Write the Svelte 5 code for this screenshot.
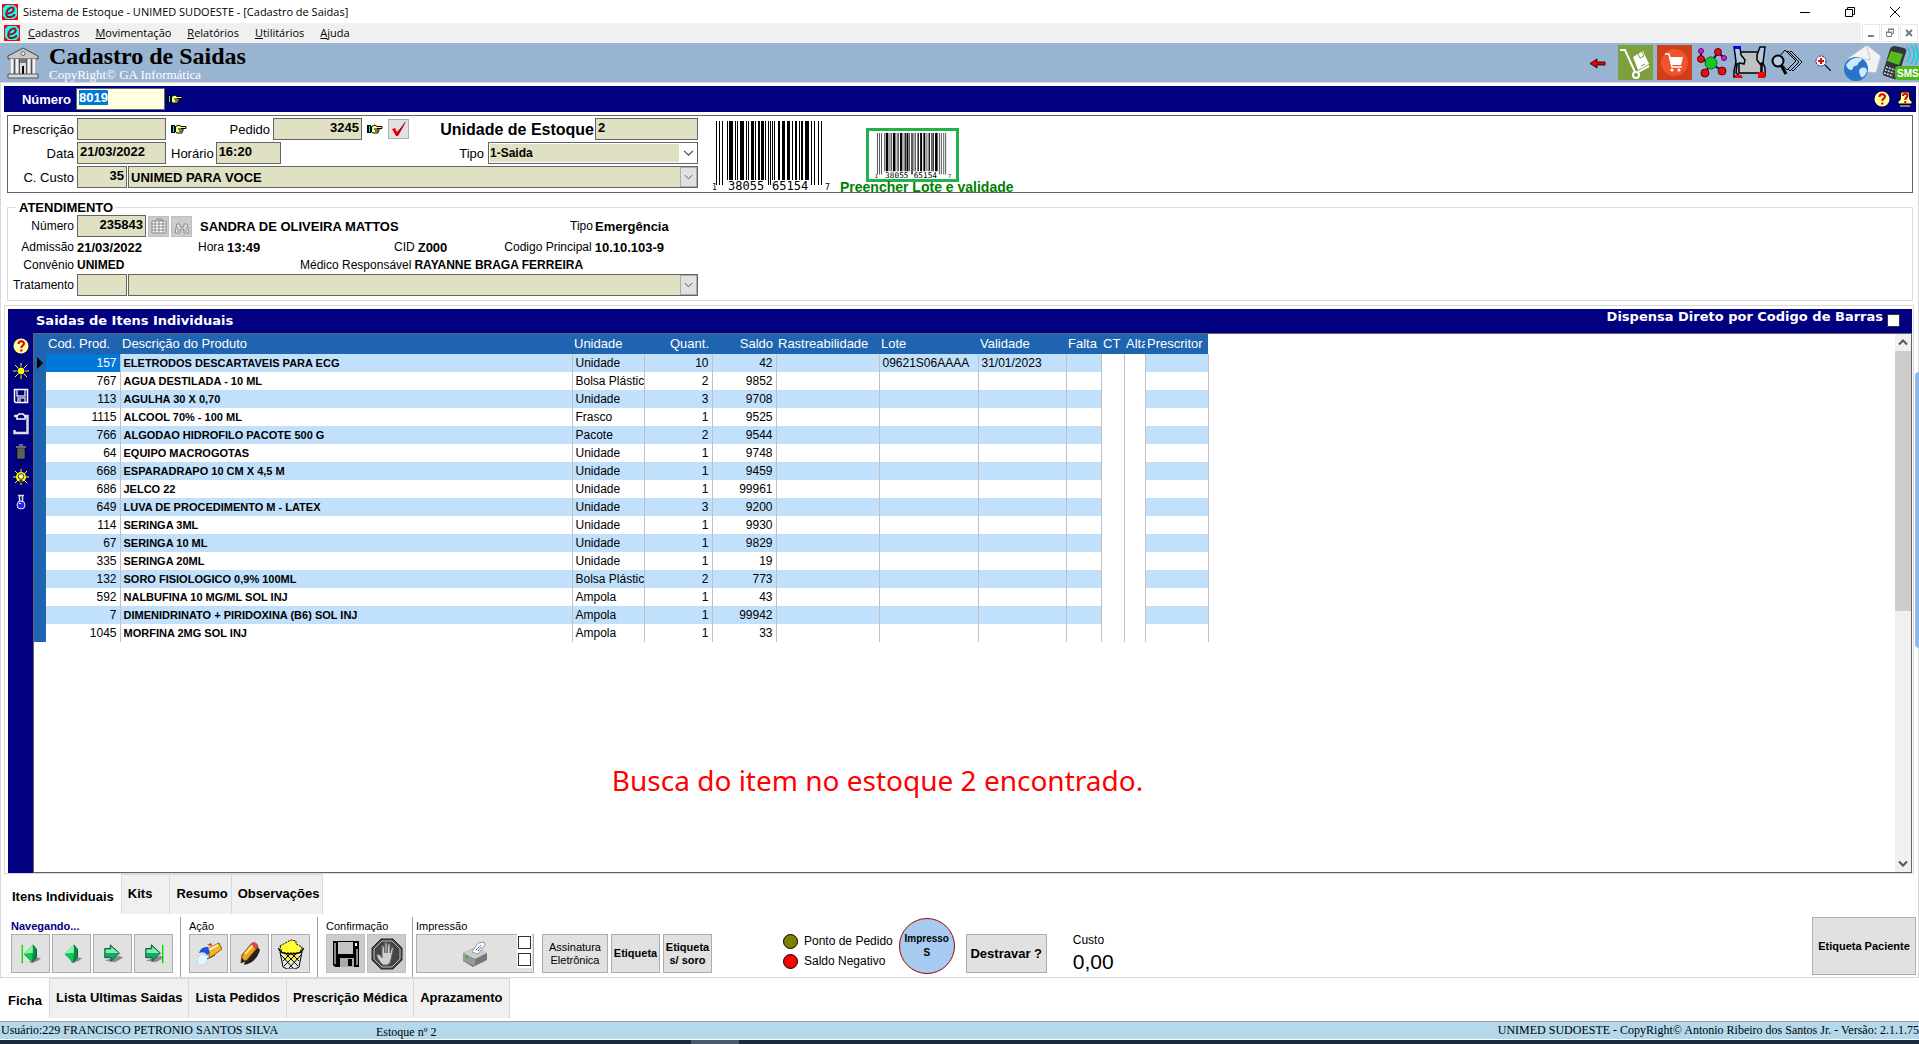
<script lang="ts">
  import { onMount } from 'svelte';

  type Item = { cod: number; desc: string; un: string; qt: number; saldo: number; lote?: string; val?: string };

  const menus = ['Cadastros', 'Movimentação', 'Relatórios', 'Utilitários', 'Ajuda'];
  const items: Item[] = [
    { cod: 157, desc: 'ELETRODOS DESCARTAVEIS PARA ECG', un: 'Unidade', qt: 10, saldo: 42, lote: '09621S06AAAA', val: '31/01/2023' },
    { cod: 767, desc: 'AGUA DESTILADA - 10 ML', un: 'Bolsa Plástica', qt: 2, saldo: 9852 },
    { cod: 113, desc: 'AGULHA 30 X 0,70', un: 'Unidade', qt: 3, saldo: 9708 },
    { cod: 1115, desc: 'ALCOOL 70% - 100 ML', un: 'Frasco', qt: 1, saldo: 9525 },
    { cod: 766, desc: 'ALGODAO HIDROFILO PACOTE 500 G', un: 'Pacote', qt: 2, saldo: 9544 },
    { cod: 64, desc: 'EQUIPO MACROGOTAS', un: 'Unidade', qt: 1, saldo: 9748 },
    { cod: 668, desc: 'ESPARADRAPO 10 CM X 4,5 M', un: 'Unidade', qt: 1, saldo: 9459 },
    { cod: 686, desc: 'JELCO 22', un: 'Unidade', qt: 1, saldo: 99961 },
    { cod: 649, desc: 'LUVA DE PROCEDIMENTO M - LATEX', un: 'Unidade', qt: 3, saldo: 9200 },
    { cod: 114, desc: 'SERINGA 3ML', un: 'Unidade', qt: 1, saldo: 9930 },
    { cod: 67, desc: 'SERINGA 10 ML', un: 'Unidade', qt: 1, saldo: 9829 },
    { cod: 335, desc: 'SERINGA 20ML', un: 'Unidade', qt: 1, saldo: 19 },
    { cod: 132, desc: 'SORO FISIOLOGICO 0,9% 100ML', un: 'Bolsa Plástica', qt: 2, saldo: 773 },
    { cod: 592, desc: 'NALBUFINA 10 MG/ML SOL INJ', un: 'Ampola', qt: 1, saldo: 43 },
    { cod: 7, desc: 'DIMENIDRINATO + PIRIDOXINA (B6) SOL INJ', un: 'Ampola', qt: 1, saldo: 99942 },
    { cod: 1045, desc: 'MORFINA 2MG SOL INJ', un: 'Ampola', qt: 1, saldo: 33 }
  ];
  const itemTabs = ['Itens Individuais', 'Kits', 'Resumo', 'Observações'];
  const pageTabs = ['Ficha', 'Lista Ultimas Saidas', 'Lista Pedidos', 'Prescrição Médica', 'Aprazamento'];

  // [x, width] of the tall guard bars and of the short data bars
  const guards = [[4, 1], [7, 1], [10, 1], [56, 1], [58, 1], [99, 1], [102, 1], [106, 1], [109, 1]];
  const bars = [
    [15, 1], [17, 4], [23, 1], [25, 1], [28, 4], [34, 1], [36, 1], [39, 3], [43, 1], [46, 2], [49, 3], [53, 1],
    [60, 1], [62, 1], [66, 2], [70, 3], [75, 3], [80, 1], [83, 2], [87, 1], [89, 2], [93, 4]
  ];

  let numero: HTMLInputElement;
  onMount(() => {
    numero.focus();
    numero.select();
  });
</script>

{#snippet appIcon()}
  <svg class="i16" viewBox="0 0 16 16"><rect width="16" height="16" fill="#f00" /><path d="M4 1h8l3 3v8l-3 3H4l-3-3V4z" fill="#1ff" /><path d="M5 9.500C9 9.500 12.500 7 11.500 4.500 10.500 2.200 6 4 4.500 8c-1.200 4 1.500 5.500 4 5 2.500-.5 4-2 4-3" fill="none" stroke="#901818" stroke-width="2" /></svg>
{/snippet}

{#snippet hand()}
  <svg class="hand" viewBox="0 0 16 10"><path d="M0 1h4v8H0z" fill="#000" /><path d="M2 2h1v6H2z" fill="#0ff" /><path d="M4.500 2.500 8 1l2 1.500h5v2h-5l2 .5v2l-1 .5v1.500H6L4.500 8z" fill="#ffff8a" stroke="#000" /><path d="M7 5h4M8 7h3" stroke="#000" /></svg>
{/snippet}

{#snippet help()}
  <svg class="i16" viewBox="0 0 16 16"><circle cx="8" cy="8" r="7.500" fill="#ffff9c" /><path d="M5.500 6c0-3.500 5.500-3.500 5.500-.5C11 7.500 8.300 7.500 8.300 10" fill="none" stroke="#e00000" stroke-width="2" /><path d="M7.200 11.500h2.200v2H7.200z" fill="#e00000" /></svg>
{/snippet}

{#snippet helpBell()}
  <svg class="i16" viewBox="0 0 16 16"><path d="M4 1h8l1 8 2 1v3H1v-3l2-1z" fill="#ffff9c" stroke="#000" /><path d="M3 15h10" stroke="#ffff9c" /><path d="M6 5c0-3 4.500-3 4.500-.5C10.500 6.500 8.300 6.500 8.300 9" fill="none" stroke="#e00000" stroke-width="2" /><path d="M7.200 10.200h2.200V12H7.200z" fill="#e00000" /></svg>
{/snippet}

{#snippet chevron()}
  <svg class="chev" viewBox="0 0 10 6"><path d="M1 1l4 4 4-4" fill="none" stroke="#444" /></svg>
{/snippet}

{#snippet barcode()}
  <svg class="barcode" viewBox="0 0 118 74">
    {#each guards as [x, w]}<rect {x} y="3" width={w} height="64" />{/each}
    {#each bars as [x, w]}<rect {x} y="3" width={w} height="59" />{/each}
    <text x="0" y="72" class="tiny">1</text>
    <text x="16" y="72">38055</text>
    <text x="60" y="72">65154</text>
    <text x="113" y="72" class="tiny">7</text>
  </svg>
{/snippet}

{#snippet arrowLeft(bar: boolean)}
  <svg class="i24" viewBox="0 0 24 24">
    <path d="M10 20l8-4h5l-3 3-7 3z" fill="#8a8a8a" />
    {#if bar}<path d="M2.500 2v20" stroke="#0d0" stroke-width="1.500" />{/if}
    <path d="M4 12 14 2l4 5v9l-5 5z" fill="#0a8a44" />
    <path d="M4 12 14 2v9z" fill="#7dffa0" />
    <path d="M4 12l10-1-1 10z" fill="#12c850" />
    <path d="M14 2l4 5v9l-5 5" fill="none" stroke="#045030" />
  </svg>
{/snippet}

{#snippet arrowRight(bar: boolean)}
  <svg class="i24" viewBox="0 0 24 24">
    <path d="M3 19l11 2 9-5-4-2z" fill="#8a8a8a" />
    {#if bar}<path d="M21.500 2v20" stroke="#0d0" stroke-width="1.500" />{/if}
    <path d="M3 6h6V2l10 9-9 9v-4H3z" fill="#14a860" stroke="#045030" />
    <path d="M4 7h6V4l8 7H4z" fill="#7df0b0" />
  </svg>
{/snippet}

<div class="app">
  <header>
    <div class="titlebar">
      {@render appIcon()}
      <span>Sistema de Estoque - UNIMED SUDOESTE - [Cadastro de Saidas]</span>
      <div class="winbtns">
        <button aria-label="Minimizar"><svg viewBox="0 0 12 12"><path d="M1 6.500h10" /></svg></button>
        <button aria-label="Restaurar"><svg viewBox="0 0 12 12"><path d="M1.500 3.500h7v7h-7zM3.500 3.500v-2h7v7h-2" /></svg></button>
        <button aria-label="Fechar"><svg viewBox="0 0 12 12"><path d="M1 1l10 10M11 1L1 11" /></svg></button>
      </div>
    </div>
    <nav class="menubar">
      {@render appIcon()}
      {#each menus as m}
        <a href="#{m}"><u>{m[0]}</u>{m.slice(1)}</a>
      {/each}
      <div class="mdibtns">
        <button aria-label="Minimizar janela"><svg viewBox="0 0 10 10"><path d="M2 8h6" /></svg></button>
        <button aria-label="Restaurar janela"><svg viewBox="0 0 10 10"><path class="thin" d="M1.500 4.500h5v4h-5zM1 4h6M3.500 4V1.500h5v4h-2M3 1h6" /></svg></button>
        <button aria-label="Fechar janela"><svg viewBox="0 0 10 10"><path d="M2 2l6 6M8 2L2 8" /></svg></button>
      </div>
    </nav>
    <div class="banner">
      <svg class="bank" viewBox="0 0 32 32">
        <path d="M1 9 16 1l15 8v3H1z" fill="#c8c8c8" stroke="#444" />
        <circle cx="16" cy="6.500" r="2" fill="#eee" stroke="#666" />
        <path d="M3 12h26v16H3z" fill="#777" />
        <path d="M5 12v15M10 12v15M22 12v15M27 12v15" stroke="#f4f4f4" stroke-width="3" />
        <path d="M7.500 12v15M12.500 12v15M19.500 12v15M24.500 12v15" stroke="#555" />
        <path d="M13 16h6v11h-6z" fill="#ddd" /><path d="M15 19h2v8h-2z" fill="#000" />
        <path d="M1 27h30v4H1z" fill="#d8d8d8" stroke="#555" />
      </svg>
      <div class="brand">
        <h1>Cadastro de Saidas</h1>
        <p>CopyRight© GA Informática</p>
      </div>
      <div class="tools">
        <svg class="i16" viewBox="0 0 16 16"><path d="M0 8.500 7 4v3h8v3H7v3z" fill="#e00" stroke="#000" stroke-width=".8" /></svg>
        <svg class="i35" viewBox="0 0 35 35"><rect width="35" height="35" fill="#7d9f3c" /><path d="M2 5h5l10 22" fill="none" stroke="#fff" stroke-width="2" /><circle cx="18" cy="30" r="3" fill="none" stroke="#fff" stroke-width="2" /><path d="M20 27l11-6" stroke="#fff" stroke-width="2" /><path d="M15 12l10-6 6 13-11 6z" fill="#fff" /><path d="M20 9l2 4 4-2-2-4M23 21l4-2" fill="none" stroke="#7d9f3c" /></svg>
        <svg class="i35" viewBox="0 0 35 35"><rect width="35" height="35" fill="#cf3f1a" /><circle cx="17.500" cy="17.500" r="13.500" fill="#f0532d" /><path d="M8 9h4l3 13h10" fill="none" stroke="#fff" stroke-width="1.500" /><path d="M12 12h14l-2 8H14z" fill="#fff" /><circle cx="15" cy="25" r="1.500" fill="#fff" /><circle cx="22" cy="25" r="1.500" fill="#fff" /></svg>
        <svg class="i32" viewBox="0 0 32 32"><path d="M15 16 5 12 5 4M15 16 22 5l6 6M15 16 9 26M15 16l11 8" stroke="#008" stroke-width="2" fill="none" /><circle cx="15" cy="16" r="6" fill="#18c818" stroke="#063" /><g fill="#e01010" stroke="#600"><circle cx="5" cy="12" r="3.500" /><circle cx="22" cy="5" r="3.500" /><circle cx="9" cy="26" r="4" /><circle cx="26" cy="24" r="4" /></g><g fill="#d020d0" stroke="#606"><circle cx="5" cy="4" r="2.500" /><circle cx="28" cy="11" r="2.500" /></g></svg>
        <svg class="i35" viewBox="0 0 35 35"><path d="M7 7h22v21H7z" fill="#c0c0c0" stroke="#000" stroke-width="1.500" /><path d="M2 2h6l1 8 4 5-1 4-4-1-3 1-1 9 5 4H2v-6l2-9-1-8zM33 2h-5l-3 8v5l3 4 2-1v8l-3 5h6v-8l-2-5 1-8z" fill="#b4c8e0" stroke="#000" stroke-width="1.500" /><path d="M2 1h7v3H2z" fill="#00f" /><path d="M3 30h7v3H3zM26 27h7v6h-7z" fill="#f00" /></svg>
        <svg class="i32" viewBox="0 0 32 32"><g fill="#99b4d1" stroke="#000"><path d="M20 4l11 11-9 9L12 13z" /><path d="M17 4l11 11-9 9L9 13z" /><path d="M14 3l11 11-9 9L6 12z" /></g><circle cx="7" cy="14" r="5.500" fill="#b8cce4" stroke="#000" stroke-width="2" /><path d="M10 18l5 9" stroke="#000" stroke-width="3" /></svg>
        <svg class="i16" viewBox="0 0 16 16"><circle cx="6" cy="6" r="5" fill="#fff" stroke="#222" stroke-dasharray="2 1" /><path d="M6 3v6M3 6h6" stroke="#e00" stroke-width="2" /><path d="M10 10l6 6" stroke="#222" stroke-width="1.500" /></svg>
        <svg class="i38" viewBox="0 0 38 36"><path d="M5 13 24 0l14 11-5 17-16-2z" fill="#f2f2f2" stroke="#b4b8c4" /><path d="M6 13l21 2L24 1" fill="none" stroke="#c4c8d0" /><circle cx="13" cy="24" r="12" fill="#2a74c8" /><path d="M3 20c4-7 12-9 16-6-1 3-3 2-4 5s-5 1-5 4-5 3-7-3zM17 24c4-3 7-1 7 2-1 4-4 7-6 6-1-3-3-5-1-8z" fill="#cfe8ff" /></svg>
        <svg class="i38" viewBox="0 0 38 36"><path d="M9 4q1-3 5-3l9 2q3 1 2 4l-8 25q-1 3-4 2l-9-3q-3-1-2-4z" fill="#30343c" /><path d="M10 6l12 3-4 11-12-4z" fill="#58b81c" /><path d="M5 22l9 3M4 25l9 3M3 28l9 3" stroke="#ddd" stroke-dasharray="2 1" stroke-width="1.500" /><path d="M26 2q6 7 0 15M30 0q7 9 0 19M34 0q6 10 0 20" fill="none" stroke="#1cd" stroke-width="1.500" /><rect x="14" y="21" width="26" height="14" rx="4" fill="#4cb81c" /><text x="16" y="32" class="sms">SMS</text></svg>
      </div>
    </div>
  </header>

  <main>
    <div class="numbar">
      <label for="numero">Número</label>
      <input id="numero" class="field" bind:this={numero} value="8019" />
      {@render hand()}
      <div class="helps">{@render help()}{@render helpBell()}</div>
    </div>

    <section class="box">
      <div class="fields">
        <div class="row">
          <label class="lead" for="presc">Prescrição</label>
          <input id="presc" class="field w89" value="" />
          {@render hand()}
          <label class="ped" for="pedido">Pedido</label>
          <input id="pedido" class="field w89 num" value="3245" />
          {@render hand()}
          <button class="check" aria-label="Confirmar"><svg viewBox="0 0 16 16"><path d="M1 8l3-1 2 4 9-10-8 14H5z" fill="#e00" /><path d="M14 1 6 14" stroke="#400" stroke-width=".6" /></svg></button>
          <label class="big" for="unid">Unidade de Estoque</label>
          <input id="unid" class="field w103" value="2" />
        </div>
        <div class="row">
          <label class="lead" for="data">Data</label>
          <input id="data" class="field w89" value="21/03/2022" />
          <label class="hor" for="hora">Horário</label>
          <input id="hora" class="field w65" value="16:20" />
          <label class="tipo" for="tipo">Tipo</label>
          <div class="combo light"><select id="tipo"><option>1-Saida</option></select>{@render chevron()}</div>
        </div>
        <div class="row">
          <label class="lead" for="ccod">C. Custo</label>
          <input id="ccod" class="field w50 num" value="35" />
          <div class="combo"><select aria-label="Centro de custo"><option>UNIMED PARA VOCE</option></select>{@render chevron()}</div>
        </div>
      </div>
      {@render barcode()}
      <div class="lote">
        <button class="green" aria-label="Código de barras">{@render barcode()}</button>
        <strong>Preencher Lote e validade</strong>
      </div>
    </section>

    <fieldset>
      <legend>ATENDIMENTO</legend>
      <div class="row">
        <label class="lead" for="atn">Número</label>
        <input id="atn" class="field w69 num" value="235843" />
        <button class="mini" aria-label="Calendário"><svg class="i16" viewBox="0 0 16 16"><path d="M1 3h14v12H1z" fill="#fff" /><path d="M1 6h14M1 9h14M1 12h14M4 3v12M8 3v12M12 3v12M1 3h14v12H1zM5 1h6v2" stroke="#888" fill="none" /></svg></button>
        <button class="mini" aria-label="Localizar"><svg class="i16" viewBox="0 0 16 16"><path d="M3 6h3v3h4V6h3l2 9h-5v-4H6v4H1z" fill="#eee" stroke="#888" /><path d="M4 9v5M12 9v5" stroke="#888" /></svg></button>
        <b class="patient">SANDRA DE OLIVEIRA MATTOS</b>
        <span class="k tipoat">Tipo</span><b>Emergência</b>
      </div>
      <div class="row info">
        <span class="k lead">Admissão</span><b class="v1">21/03/2022</b>
        <span class="k">Hora</span><b class="v2">13:49</b>
        <span class="k">CID</span><b class="v3">Z000</b>
        <span class="k cod">Codigo Principal</span><b>10.10.103-9</b>
      </div>
      <div class="row info small">
        <span class="k lead">Convênio</span><b class="v4">UNIMED</b>
        <span class="k">Médico Responsável</span><b>RAYANNE BRAGA FERREIRA</b>
      </div>
      <div class="row">
        <label class="lead" for="trat">Tratamento</label>
        <input id="trat" class="field w50" value="" />
        <div class="combo"><select aria-label="Tratamento"><option></option></select>{@render chevron()}</div>
      </div>
    </fieldset>

    <section class="pane">
      <div class="panehead">
        <h2>Saidas de Itens Individuais</h2>
        <label>Dispensa Direto por Codigo de Barras <input type="checkbox" class="box13" /></label>
      </div>
      <div class="panebody">
        <div class="side">
          {@render help()}
          <svg class="i16" viewBox="0 0 16 16"><path d="M8 0v16M0 8h16M2 2l12 12M14 2L2 14" stroke="#ff0" /><circle cx="8" cy="8" r="4" fill="#ff0" stroke="#000080" /></svg>
          <svg class="i16" viewBox="0 0 16 16"><path d="M1.500 1.500h13v13h-12l-1-1z" fill="#000080" stroke="#fff" stroke-width="1.500" /><path d="M4 2v6h8V2M5 14v-4h7v4M7 11v3" stroke="#ccc" fill="none" stroke-width="1.500" /></svg>
          <svg class="i22" viewBox="0 0 16 22"><path d="M1 3h3M11 3h3.500v17H1.500v-3" fill="none" stroke="#ddd" stroke-width="2.500" /><path d="M4 6V3l2-2h4l2 2v3z" fill="#000080" stroke="#fff" stroke-width="1.500" /></svg>
          <svg class="i16" viewBox="0 0 16 16"><path d="M4 4h8v11H4z" fill="#999" stroke="#000" /><path d="M3 3h10M6 1h4" stroke="#888" stroke-width="1.500" /><path d="M6 5v9M8 5v9M10 5v9" stroke="#222" /></svg>
          <svg class="i16" viewBox="0 0 16 16"><path d="M8 0v16M0 8h16M2 2l12 12M14 2L2 14" stroke="#ff0" /><circle cx="8" cy="8" r="5" fill="#ff0" /><circle cx="8" cy="7.500" r="2.800" fill="#ffa" stroke="#333" /><path d="M6.500 11h3v3h-3z" fill="#333" /></svg>
          <svg class="i16" viewBox="0 0 16 16"><path d="M6.500 1v6M9.500 1v6M5 1.500h6" stroke="#ddd" stroke-width="1.500" /><circle cx="8" cy="11" r="4" fill="#22f" stroke="#eee" /><path d="M6 9.500h2" stroke="#fff" /></svg>
        </div>
        <div class="grid">
          <div class="gridmain">
            <table>
              <colgroup><col class="c0" /><col class="c1" /><col class="c2" /><col class="c3" /><col class="c4" /><col class="c5" /><col class="c6" /><col class="c7" /><col class="c8" /><col class="c9" /><col class="c10" /><col class="c11" /><col class="c12" /></colgroup>
              <thead>
                <tr><th></th><th>Cod. Prod.</th><th>Descrição do Produto</th><th>Unidade</th><th class="r">Quant.</th><th class="r">Saldo</th><th>Rastreabilidade</th><th>Lote</th><th>Validade</th><th>Falta</th><th>CT</th><th>Alta</th><th>Prescritor</th></tr>
              </thead>
              <tbody>
                {#each items as it, i}
                  <tr>
                    <td class="ind">{#if i === 0}<svg viewBox="0 0 6 12"><path d="M0 0l6 6-6 6z" /></svg>{/if}</td>
                    <td class="r" class:sel={i === 0}>{it.cod}</td>
                    <td class="desc">{it.desc}</td>
                    <td>{it.un}</td>
                    <td class="r">{it.qt}</td>
                    <td class="r">{it.saldo}</td>
                    <td></td>
                    <td>{it.lote ?? ''}</td>
                    <td>{it.val ?? ''}</td>
                    <td></td><td class="plain"></td><td class="plain"></td><td></td>
                  </tr>
                {/each}
              </tbody>
            </table>
            <p class="msg">Busca do item no estoque 2 encontrado.</p>
          </div>
          <div class="scroll">
            <svg viewBox="0 0 10 6"><path d="M1 5l4-4 4 4" /></svg>
            <div class="thumb"></div>
            <svg viewBox="0 0 10 6"><path d="M1 1l4 4 4-4" /></svg>
          </div>
        </div>
      </div>
    </section>

    <div class="tabs upper">
      {#each itemTabs as t, i}<button class:active={i === 0} class:kits={i === 1}>{t}</button>{/each}
    </div>

    <div class="toolbar">
      <div class="group first">
        <b class="navy">Navegando...</b>
        <div class="btns">
          <button class="sq" aria-label="Primeiro">{@render arrowLeft(true)}</button>
          <button class="sq" aria-label="Anterior">{@render arrowLeft(false)}</button>
          <button class="sq" aria-label="Próximo">{@render arrowRight(false)}</button>
          <button class="sq" aria-label="Último">{@render arrowRight(true)}</button>
        </div>
      </div>
      <div class="group">
        <span>Ação</span>
        <div class="btns">
          <button class="sq" aria-label="Novo"><svg class="i26" viewBox="0 0 26 26"><path d="M11 8l12-6 3 6-12 9z" fill="#f0b428" stroke="#8c5c00" /><path d="M12 9l10-5" stroke="#fff0a0" stroke-width="2" /><path d="M3 12q2-7 9-6l2 6-3 2q-2-4-8-2z" fill="#1c50e0" /><path d="M11 4l4-2 1 3z" fill="#e02020" /><path d="M1 22q-1-6 5-9l6 2q1 6-3 8-5 3-8-1z" fill="#dff6ff" stroke="#8cc" stroke-dasharray="1 1" /><path d="M11 18l8-4" stroke="#604000" /></svg></button>
          <button class="sq" aria-label="Editar"><svg class="i26" viewBox="0 0 26 26"><path d="M7 24q12-2 16-15l-3-4-12 15z" fill="#222" /><path d="M4 22l1-8L15 2q5-1 6 4L10 19z" fill="#f4a020" stroke="#803c00" /><path d="M8 13 16 4" stroke="#fff080" stroke-width="2" /><path d="M15 2q5-2 6 4l-3 2-4-5z" fill="#d84850" /><path d="M4 22l1-5 3 3z" fill="#222" /></svg></button>
          <button class="sq" aria-label="Excluir"><svg class="i30" viewBox="0 0 30 30"><path d="M4 13h22l-3 15-4 2h-8l-4-2z" fill="#e4e4e4" stroke="#000" /><path d="M7 14h16l-2 8H9z" fill="#f4f040" /><path d="M5 16l12 13M9 14l13 13M15 14l8 8M25 16 13 29M21 14 8 27M15 14l-8 8" stroke="#000" /><path d="M4 7l9-5 2-1 5 1v3l6 3-2 6H6z" fill="#ffff38" stroke="#000" stroke-dasharray="2 1" /><path d="M2.500 9q1 6 12.500 6t12.500-6" fill="none" stroke="#000" stroke-width="1.500" /></svg></button>
        </div>
      </div>
      <div class="group">
        <span>Confirmação</span>
        <div class="btns">
          <button class="sq dim" aria-label="Gravar"><svg class="i26" viewBox="0 0 26 26"><path d="M0 0h26v26H2l-2-2z" fill="#000" /><path d="M5 1h15v12H5z" fill="#c4c4c4" /><path d="M22 2h2v3h-2z" fill="#fff" /><path d="M2 2v21M24 8v16" stroke="#888" stroke-width="2" /><path d="M7 17h14v9H7z" fill="#aaa" /><path d="M15 18h4v7h-4z" fill="#000" /></svg></button>
          <button class="sq dim" aria-label="Cancelar"><svg class="i32" viewBox="0 0 32 32"><path d="M10 1h12l9 9v12l-9 9H10l-9-9V10z" fill="#444" stroke="#222" /><path d="M11 3h10l8 8v10l-8 8H11l-8-8V11z" fill="none" stroke="#bbb" /><path d="M12 27q-7-7-6-11l3 1 2 3V8q2-1 2 1l1 6V5q2-1 2 1v9l1-9q2-1 2 1v8l2-6q2 0 1 3l-2 9q0 5-4 6z" fill="#d0d0d0" stroke="#666" /></svg></button>
        </div>
      </div>
      <div class="group print">
        <span>Impressão</span>
        <div class="btns">
          <button class="printer" aria-label="Imprimir"><svg class="i26" viewBox="0 0 26 26"><path d="M1 12 14 6l11 6v7l-14 7L1 20z" fill="#777" /><path d="M1 12 14 6l11 6-12 6z" fill="#ccc" /><path d="M1 12l12 6v7L1 20z" fill="#999" /><path d="M10 11l6-9 6-1 1 3-7 9z" fill="#fff" stroke="#999" /><path d="M14 9l5-5M16 10l4-5" stroke="#33f" stroke-dasharray="2 1" /><path d="M4 16h2" stroke="#0c0" stroke-width="2" /></svg></button>
          <div class="opts"><input type="checkbox" class="box13" aria-label="Opção 1" /><input type="checkbox" class="box13" aria-label="Opção 2" /></div>
          <button class="w66">Assinatura Eletrônica</button>
          <button class="w49"><b>Etiqueta</b></button>
          <button class="w49"><b>Etiqueta s/ soro</b></button>
        </div>
      </div>
      <div class="legend">
        <span><i class="dot olive"></i>Ponto de Pedido</span>
        <span><i class="dot red"></i>Saldo Negativo</span>
      </div>
      <button class="round">Impresso<br />S</button>
      <button class="unlock">Destravar ?</button>
      <div class="cost"><span>Custo</span><output>0,00</output></div>
      <button class="patientlabel">Etiqueta Paciente</button>
    </div>
  </main>

  <div class="tabs lower">
    {#each pageTabs as t, i}<button class:active={i === 0}>{t}</button>{/each}
  </div>
  <footer>
    <span class="user">Usuário:229 FRANCISCO PETRONIO SANTOS SILVA</span>
    <span class="stock">Estoque nº 2</span>
    <span class="ver">UNIMED SUDOESTE - CopyRight© Antonio Ribeiro dos Santos Jr. - Versão: 2.1.1.75</span>
  </footer>
  <div class="taskbar"><i></i></div>
  <div class="edge"></div>
</div>

<style>
  :global(body) { margin: 0; background: #fff; }
  * { box-sizing: border-box; }
  .app { position: relative; min-height: 100vh; display: flex; flex-direction: column; overflow: hidden; font: 13px/15px "Liberation Sans", Arial, sans-serif; color: #000; }
  h1, h2, p { margin: 0; }
  svg { display: block; flex: none; }
  button, input, select { font: inherit; color: inherit; margin: 0; padding: 0; border-radius: 0; }
  button { border: 0; background: none; }
  .i16 { width: 16px; height: 16px; }
  .i22 { width: 16px; height: 22px; }
  .i24 { width: 22px; height: 24px; }
  .i26 { width: 26px; height: 26px; }
  .i30 { width: 30px; height: 30px; }
  .i32 { width: 32px; height: 32px; }
  .i35 { width: 35px; height: 35px; }
  .i38 { width: 38px; height: 36px; }
  .hand { width: 16px; height: 10px; }
  .sms { font: bold 10px "Liberation Sans", sans-serif; fill: #fff; }

  .titlebar, .menubar { display: flex; align-items: center; font: 11px/16px "Open Sans", "Noto Sans", sans-serif; }
  .titlebar { height: 23px; padding-left: 2px; gap: 5px; }
  .winbtns { margin-left: auto; display: flex; gap: 33px; padding-right: 18px; }
  .winbtns svg { width: 12px; height: 12px; fill: none; stroke: #000; }
  .menubar { height: 20px; background: #f0f0f0; padding-left: 4px; }
  .menubar a { color: #000; text-decoration: none; margin: 0 8px; }
  .mdibtns { margin-left: auto; display: flex; gap: 1px; background: #fff; padding: 1px; }
  .mdibtns button { width: 18px; height: 18px; border: 1px solid #e8e8e8; display: grid; place-items: center; }
  .mdibtns svg { width: 10px; height: 10px; fill: none; stroke: #6b7f94; stroke-width: 2; }
  .mdibtns .thin { stroke-width: 1; }
  .banner { display: flex; height: 39px; background: #99b4d1; padding-left: 7px; align-items: center; }
  .bank { width: 32px; height: 32px; }
  .brand { padding-left: 10px; font-family: "Liberation Serif", "Times New Roman", serif; }
  h1 { font-size: 24px; line-height: 24px; }
  .brand p { font-size: 13px; line-height: 13px; color: #fff; }
  .tools { margin-left: auto; display: flex; align-items: center; gap: 4px; }
  .tools .i16 { margin: 0 8px; }
  .tools .i38:last-child { margin-left: -4px; }

  main { flex: 1; display: flex; flex-direction: column; border: 1px solid #d9d9d9; padding: 3px 2px 0 3px; }
  .numbar { display: flex; align-items: center; height: 26px; background: #000080; color: #fff; }
  .numbar label { font-weight: bold; width: 67px; text-align: right; margin-right: 5px; }
  .field { height: 22px; border: 1px solid #646464; background: #e0e1c3; font-weight: bold; padding: 0 2px 3px; color: #000; outline: none; }
  .numbar .field { width: 89px; background: #ffffe1; }
  .numbar .hand { margin-left: 2px; }
  .field::selection { background: #0078d7; color: #fff; }
  .helps { margin-left: auto; display: flex; gap: 7px; padding-right: 3px; }

  .box { margin: 3px 3px 0; border: 1px solid #646464; height: 78px; display: flex; padding-top: 2px; }
  .fields { width: 690px; display: flex; flex-direction: column; gap: 2px; }
  .row { display: flex; align-items: center; height: 22px; }
  .lead { width: 66px; text-align: right; margin-right: 3px; flex: none; }
  .num { text-align: right; }
  .w50 { width: 50px; margin-right: 1px; }
  .w65 { width: 65px; }
  .w69 { width: 69px; }
  .w89 { width: 89px; }
  .w103 { width: 103px; }
  .row .hand { margin-left: 5px; }
  .ped { width: 83px; text-align: right; margin-right: 3px; }
  .hor { margin: 0 2px 0 5px; }
  .tipo { margin-left: auto; margin-right: 4px; }
  .check { width: 21px; height: 20px; border: 1px solid #adadad; background: #e1e1e1; margin-left: 5px; display: grid; place-items: center; }
  .check svg { width: 16px; height: 16px; }
  .big { font-weight: bold; font-size: 16px; margin: 0 1px 0 auto; }
  .combo { position: relative; height: 22px; flex: 1; border: 1px solid #646464; background: #e0e1c3; }
  .combo select { appearance: none; border: 0; outline: 0; background: transparent; width: 100%; height: 20px; padding-left: 2px; font-weight: bold; }
  .combo .chev { position: absolute; right: 0; top: 0; width: 17px; height: 20px; padding: 0 3px; background: #e1e1e1; border: 1px solid #adadad; pointer-events: none; }
  .combo.light { flex: none; width: 210px; background: #fff; padding: 1px; }
  .combo.light select { background: #e0e1c3; width: 189px; height: 18px; padding-left: 0; font-size: 12px; }
  .combo.light .chev { background: #fff; border: 0; }
  .barcode { width: 118px; height: 74px; margin-left: 14px; font: 12px "DejaVu Sans Mono", monospace; }
  .barcode .tiny { font-size: 8px; }
  .lote { padding-top: 10px; margin-left: 10px; display: flex; flex-direction: column; align-items: flex-start; color: #008000; }
  .lote strong { font-size: 14px; line-height: 10px; }
  .green { border: 3px solid #22b14c; margin-left: 26px; width: 93px; height: 54px; background: #fff; padding: 0 3px; }
  .green .barcode { width: 80px; height: 48px; margin: 0 auto; }

  fieldset { margin: 7px 3px 0; padding: 0 0 4px; border: 1px solid #dcdcdc; font-size: 12px; }
  legend { font-weight: bold; font-size: 13px; line-height: 15px; margin-left: 8px; padding: 0 3px; }
  fieldset .field, fieldset b { font-size: 13px; }
  .mini { width: 21px; height: 21px; background: #ccc; border: 1px solid #bfbfbf; display: grid; place-items: center; margin-left: 2px; }
  .patient { margin-left: 8px; width: 370px; }
  .tipoat { width: 22px; }
  .k { margin-right: 3px; text-align: right; }
  .row.info { height: 20px; }
  .row.info.small { height: 17px; }
  .info .v1 { width: 121px; }
  .info .v2 { width: 167px; }
  .info .v3 { width: 84px; }
  .info .v4 { width: 223px; }
  .info .cod { width: 90px; }
  .info.small b { font-size: 12px; }
  fieldset .combo { flex: none; width: 570px; }

  .pane { flex: 1; margin: 4px 2px 0 0; border: 1px solid #d9d9d9; padding: 3px 1px 0 3px; display: flex; flex-direction: column; }
  .panehead { background: #000080; color: #fff; height: 24px; display: flex; justify-content: space-between; align-items: center; padding: 0 12px 0 28px; font: bold 13px/16px "DejaVu Sans", Verdana, sans-serif; }
  h2 { font: inherit; }
  .panehead label { display: flex; align-self: flex-start; align-items: flex-start; gap: 4px; }
  .panehead .box13 { margin-top: 5px; }
  .box13 { appearance: none; width: 13px; height: 13px; border: 1px solid #333; background: #fff; flex: none; }
  .panebody { flex: 1; display: flex; }
  .side { width: 25px; background: #000080; display: flex; flex-direction: column; align-items: center; gap: 9px; padding-top: 5px; }
  .grid { flex: 1; border: 1px solid #646464; display: flex; }
  .gridmain { flex: 1; display: flex; flex-direction: column; align-items: flex-start; }
  table { table-layout: fixed; border-collapse: collapse; width: 1174px; }
  .c0 { width: 12px; } .c1 { width: 74px; } .c2 { width: 452px; } .c3 { width: 72px; } .c4 { width: 68px; } .c5 { width: 64px; } .c6 { width: 103px; }
  .c7 { width: 99px; } .c8 { width: 88px; } .c9 { width: 35px; } .c10 { width: 23px; } .c11 { width: 21px; } .c12 { width: 63px; }
  th { background: #1f64b0; color: #fff; font: 13px/20px "Liberation Sans", Arial, sans-serif; text-align: left; padding: 0 0 0 2px; height: 20px; white-space: nowrap; overflow: hidden; }
  td { font-size: 12px; line-height: 18px; height: 18px; padding: 0 0 0 3px; border-right: 1px solid #c0c0c0; white-space: nowrap; overflow: hidden; }
  th.r, td.r { text-align: right; padding: 0 3px 0 0; }
  tbody tr:nth-child(odd) td { background: #c0e0fc; }
  tbody tr td.ind { background: #1f64b0; border: 0; padding: 0 3px; }
  tbody tr td.plain { background: #fff; }
  tbody tr td.sel { background: #0078d7; color: #fff; }
  .ind svg { width: 6px; height: 12px; }
  td.desc { font-weight: bold; font-size: 11px; }
  .msg { align-self: center; font: 28px/38px "Noto Sans", "Open Sans", sans-serif; color: #f00; margin: 119px 174px 0 0; }
  .scroll { width: 16px; background: #f0f0f0; display: flex; flex-direction: column; align-items: center; }
  .scroll svg { width: 10px; height: 17px; fill: none; stroke: #555; stroke-width: 2; }
  .scroll svg:last-child { margin-top: auto; }
  .thumb { width: 16px; height: 260px; background: #cdcdcd; }

  .tabs { display: flex; align-items: flex-start; font-weight: bold; }
  .tabs button { background: #f0f0f0; border: 1px solid #d9d9d9; border-left: 0; border-bottom: 0; padding: 0 3px 2px 6px; height: 40px; font-weight: bold; }
  .tabs .active { background: #fff; border-top: 0; padding: 5px 7px 0 8px; }
  .tabs .kits { padding-right: 17px; }
  .upper { height: 43px; }

  .toolbar { display: flex; align-items: stretch; height: 60px; font-size: 11px; line-height: 13px; }
  .toolbar button { background: #e1e1e1; border: 1px solid #adadad; }
  .group { border-left: 1px solid #a0a0a0; padding: 3px 0 0 8px; margin-left: 7px; }
  .group.first { border: 0; margin-left: 0; padding-left: 7px; }
  .group.print { padding-left: 3px; margin-left: 6px; }
  .navy { color: #000080; }
  .btns { display: flex; gap: 2px; margin-top: 1px; position: relative; }
  .sq { width: 39px; height: 39px; display: grid; place-items: center; }
  .toolbar .dim { background: #ccc; border-color: #bfbfbf; }
  .printer { width: 118px; height: 39px; display: grid; place-items: center; margin-right: 6px; }
  .opts { position: absolute; left: 101px; top: 0; display: flex; flex-direction: column; gap: 4px; padding: 2px 1px; background: #fff; }
  .w66 { width: 66px; }
  .w49 { width: 49px; margin-left: 1px; }
  .legend { display: flex; flex-direction: column; gap: 5px; padding-top: 17px; margin-left: 71px; font-size: 12px; line-height: 15px; }
  .legend span { display: flex; gap: 6px; }
  .dot { width: 15px; height: 15px; border-radius: 50%; border: 1px solid #000; }
  .olive { background: #808000; }
  .red { background: #f00; }
  .toolbar .round { width: 56px; height: 56px; border-radius: 50%; border: 1px solid #a00000; background: #a6caf0; font-weight: bold; font-size: 10px; margin: 1px 0 0 6px; line-height: 14px; }
  .toolbar .unlock { width: 81px; height: 39px; font-size: 13px; font-weight: bold; margin: 17px 0 0 11px; }
  .cost { margin: 16px 0 0 26px; display: flex; flex-direction: column; font-size: 12px; line-height: 15px; }
  .cost output { font-size: 21px; line-height: 28px; }
  .toolbar .patientlabel { width: 104px; height: 58px; margin-left: auto; font-weight: bold; }

  .lower { height: 43px; padding-left: 1px; }
  .lower button { padding: 0 6px 2px; }
  .lower .active { padding: 5px 7px 0; }
  footer { height: 18px; background: #b4d8ec; border-top: 1px solid #a0a0a0; display: flex; font: 12px/16px "Liberation Serif", "Times New Roman", serif; padding-left: 1px; }
  .user { width: 375px; }
  .stock { padding-top: 2px; }
  .ver { margin-left: auto; }
  .taskbar { height: 5px; background: #1c2c40; border-top: 1px solid #fff; display: flex; }
  .taskbar i { width: 48px; margin-left: 36%; background: #4a5c6c; }
  .edge { position: absolute; right: 0; top: 372px; width: 4px; height: 276px; background: #8db9ec; border-radius: 4px 0 0 4px; }
</style>
